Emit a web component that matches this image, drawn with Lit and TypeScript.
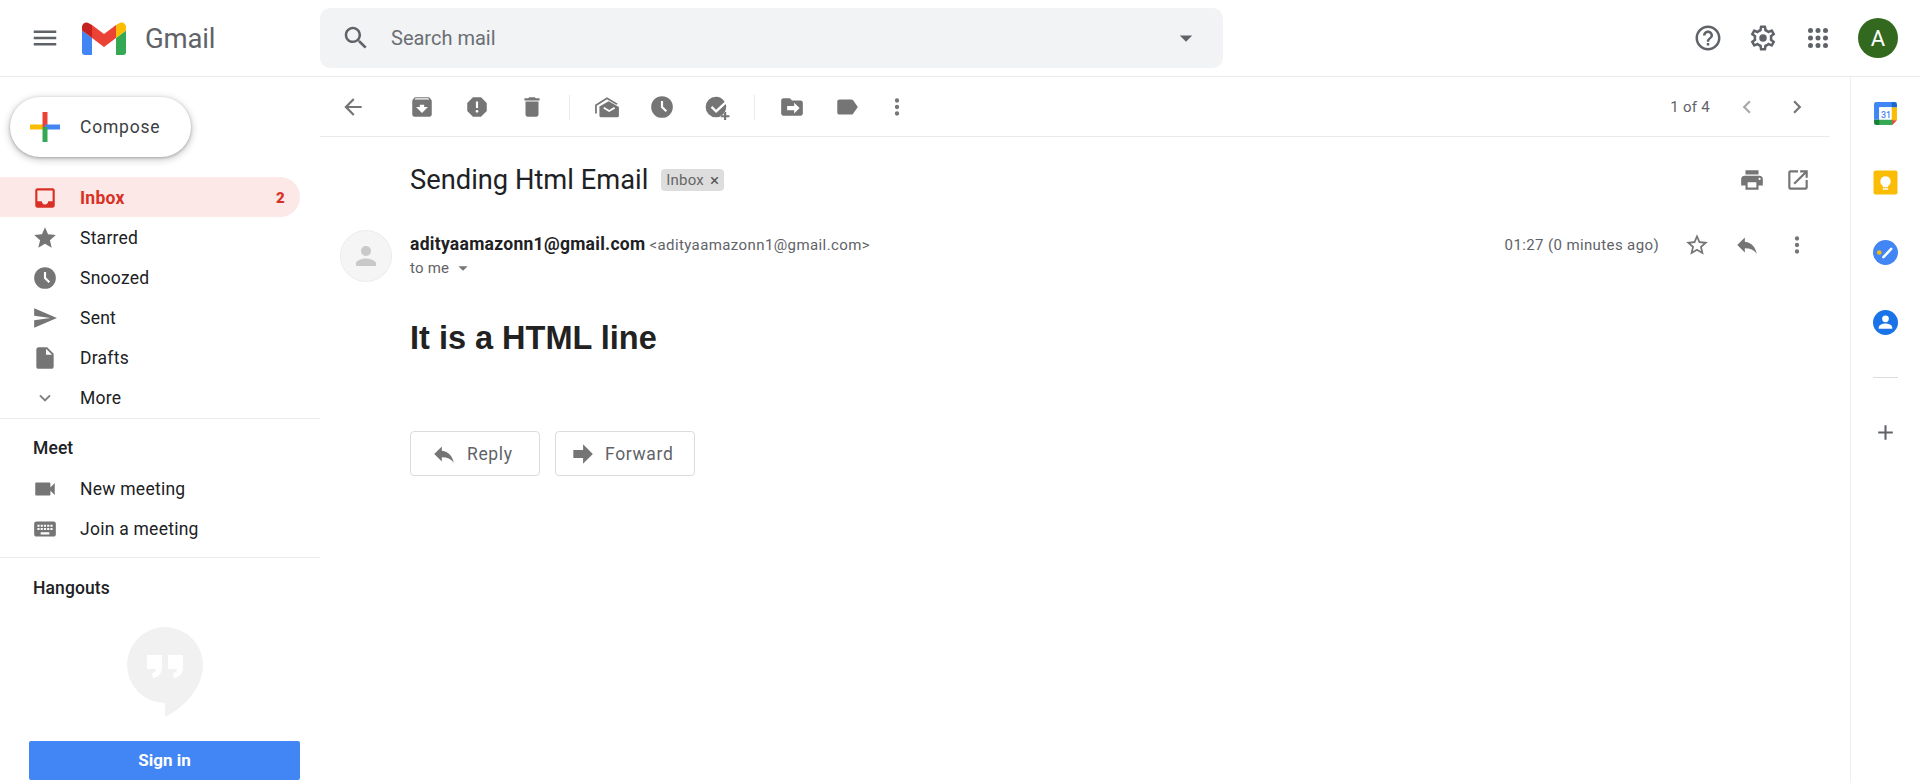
import { LitElement, html, css, svg } from "lit";
import { customElement } from "lit/decorators.js";

const P: Record<string, string> = {
  menu: "M3 18h18v-2H3v2zm0-5h18v-2H3v2zm0-7v2h18V6H3z",
  search: "M15.5 14h-.79l-.28-.27C15.41 12.59 16 11.11 16 9.5 16 5.91 13.09 3 9.5 3S3 5.91 3 9.5 5.91 16 9.5 16c1.61 0 3.09-.59 4.23-1.57l.27.28v.79l5 4.99L20.49 19l-4.99-5zm-6 0C7.01 14 5 11.99 5 9.5S7.01 5 9.5 5 14 7.01 14 9.5 11.99 14 9.5 14z",
  drop: "M7 10l5 5 5-5z",
  help: "M11 18h2v-2h-2v2zm1-16C6.48 2 2 6.48 2 12s4.48 10 10 10 10-4.48 10-10S17.52 2 12 2zm0 18c-4.41 0-8-3.59-8-8s3.59-8 8-8 8 3.59 8 8-3.59 8-8 8zm0-14c-2.21 0-4 1.79-4 4h2c0-1.1.9-2 2-2s2 .9 2 2c0 2-3 1.75-3 5h2c0-2.25 3-2.5 3-5 0-2.21-1.79-4-4-4z",
  gear: "M19.43 12.98c.04-.32.07-.64.07-.98 0-.34-.03-.66-.07-.98l2.11-1.65c.19-.15.24-.42.12-.64l-2-3.46c-.09-.16-.26-.25-.44-.25-.06 0-.12.01-.17.03l-2.49 1c-.52-.4-1.08-.73-1.69-.98l-.38-2.65C14.46 2.18 14.25 2 14 2h-4c-.25 0-.46.18-.49.42l-.38 2.65c-.61.25-1.17.59-1.69.98l-2.49-1c-.06-.02-.12-.03-.18-.03-.17 0-.34.09-.43.25l-2 3.46c-.13.22-.07.49.12.64l2.11 1.65c-.04.32-.07.65-.07.98 0 .33.03.66.07.98l-2.11 1.65c-.19.15-.24.42-.12.64l2 3.46c.09.16.26.25.44.25.06 0 .12-.01.17-.03l2.49-1c.52.4 1.08.73 1.69.98l.38 2.65c.03.24.24.42.49.42h4c.25 0 .46-.18.49-.42l.38-2.65c.61-.25 1.17-.59 1.69-.98l2.49 1c.06.02.12.03.18.03.17 0 .34-.09.43-.25l2-3.46c.12-.22.07-.49-.12-.64l-2.11-1.65zm-1.98-1.71c.04.31.05.52.05.73 0 .21-.02.43-.05.73l-.14 1.13.89.7 1.08.84-.7 1.21-1.27-.51-1.04-.42-.9.68c-.43.32-.84.56-1.25.73l-1.06.43-.16 1.13-.2 1.35h-1.4l-.19-1.35-.16-1.13-1.06-.43c-.43-.18-.83-.41-1.23-.71l-.91-.7-1.06.43-1.27.51-.7-1.21 1.08-.84.89-.7-.14-1.13c-.03-.31-.05-.54-.05-.74s.02-.43.05-.73l.14-1.13-.89-.7-1.08-.84.7-1.21 1.27.51 1.04.42.9-.68c.43-.32.84-.56 1.25-.73l1.06-.43.16-1.13.2-1.35h1.39l.19 1.35.16 1.13 1.06.43c.43.18.83.41 1.23.71l.91.7 1.06-.43 1.27-.51.7 1.21-1.07.85-.89.7.14 1.13zM12 9a3 3 0 1 0 0 6 3 3 0 0 0 0-6z",
  inbox: "M19 3H4.99c-1.11 0-1.98.89-1.98 2L3 19c0 1.1.88 2 1.99 2H19c1.1 0 2-.9 2-2V5c0-1.11-.9-2-2-2zm0 12h-4c0 1.66-1.35 3-3 3s-3-1.34-3-3H4.99V5H19v10z",
  star: "M12 17.27L18.18 21l-1.64-7.03L22 9.24l-7.19-.61L12 2 9.19 8.63 2 9.24l5.46 4.73L5.82 21z",
  starO: "M22 9.24l-7.19-.62L12 2 9.19 8.63 2 9.24l5.46 4.73L5.82 21 12 17.27 18.18 21l-1.63-7.03L22 9.24zM12 15.4l-3.76 2.27 1-4.28-3.32-2.88 4.38-.38L12 6.1l1.71 4.04 4.38.38-3.32 2.88 1 4.28L12 15.4z",
  clock: "M12 2a10 10 0 1 0 0 20 10 10 0 0 0 0-20zm3.3 14.7L11 12.4V6.5h2v5.07l3.7 3.72-1.4 1.41z",
  send: "M2.01 21L23 12 2.01 3 2 10l15 2-15 2z",
  draft: "M6 2c-1.1 0-1.99.9-1.99 2L4 20c0 1.1.89 2 1.99 2H18c1.1 0 2-.9 2-2V8l-6-6H6zm7 7V3.5L18.5 9H13z",
  more: "M16.59 8.59L12 13.17 7.41 8.59 6 10l6 6 6-6z",
  video: "M17 10.5V7c0-.55-.45-1-1-1H4c-.55 0-1 .45-1 1v10c0 .55.45 1 1 1h12c.55 0 1-.45 1-1v-3.5l4 4v-11l-4 4z",
  kb: "M20 5H4c-1.1 0-1.99.9-1.99 2L2 17c0 1.1.9 2 2 2h16c1.1 0 2-.9 2-2V7c0-1.1-.9-2-2-2zm-9 3h2v2h-2V8zm0 3h2v2h-2v-2zM8 8h2v2H8V8zm0 3h2v2H8v-2zm-1 2H5v-2h2v2zm0-3H5V8h2v2zm9 7H8v-2h8v2zm0-4h-2v-2h2v2zm0-3h-2V8h2v2zm3 3h-2v-2h2v2zm0-3h-2V8h2v2z",
  back: "M20 11H7.83l5.59-5.59L12 4l-8 8 8 8 1.41-1.41L7.83 13H20v-2z",
  archive: "M20.54 5.23l-1.39-1.68C18.88 3.21 18.47 3 18 3H6c-.47 0-.88.21-1.16.55L3.46 5.23C3.17 5.57 3 6.02 3 6.5V19c0 1.1.9 2 2 2h14c1.1 0 2-.9 2-2V6.5c0-.48-.17-.93-.46-1.27zM12 17.5L6.5 12H10v-2h4v2h3.5L12 17.5zM5.12 5l.81-1h12l.94 1H5.12z",
  report: "M15.73 3H8.27L3 8.27v7.46L8.27 21h7.46L21 15.73V8.27L15.73 3zM12 17.3c-.72 0-1.3-.58-1.3-1.3 0-.72.58-1.3 1.3-1.3.72 0 1.3.58 1.3 1.3 0 .72-.58 1.3-1.3 1.3zm1-4.3h-2V7h2v6z",
  del: "M6 19c0 1.1.9 2 2 2h8c1.1 0 2-.9 2-2V7H6v12zM19 4h-3.5l-1-1h-5l-1 1H5v2h14V4z",
  open: "M1 10L12 3l10 6-1.4.9L12 4.800 2.600 10.800V18H1zM5 11.500L13.500 6.800 23 12v8a1.500 1.500 0 0 1-1.500 1.500H6.500A1.500 1.500 0 0 1 5 20zm3.500 1.800l5.500 3.400 5.500-3.400-1-1.400-4.500 2.800-4.500-2.800z",
  task: "M11 2.500a9.500 9.500 0 1 0 9.500 9.500c0-1-.15-1.900-.4-2.800l-8.900 8.400L6.200 12.600l1.500-1.500 3.400 3.500 8-7.400A9.500 9.500 0 0 0 11 2.500zM18.500 16.500h2v3h3v2h-3v3h-2v-3h-3v-2h3z",
  folder: "M20 6h-8l-2-2H4c-1.100 0-1.990.9-1.990 2L2 18c0 1.100.9 2 2 2h16c1.100 0 2-.9 2-2V8c0-1.100-.9-2-2-2zm-6 12v-3H7.500v-4H14V8l5 5-5 5z",
  label: "M17.630 5.840C17.270 5.330 16.670 5 16 5L5 5.010C3.900 5.010 3 5.900 3 7v10c0 1.100.9 1.990 2 1.990L16 19c.67 0 1.270-.33 1.630-.84L22 12l-4.370-6.160z",
  dots: "M12 8a2 2 0 1 0 0-4 2 2 0 0 0 0 4zm0 2a2 2 0 1 0 0 4 2 2 0 0 0 0-4zm0 6a2 2 0 1 0 0 4 2 2 0 0 0 0-4z",
  prev: "M15.410 7.410L14 6l-6 6 6 6 1.410-1.410L10.830 12z",
  next: "M10 6L8.590 7.410 13.170 12l-4.580 4.590L10 18l6-6z",
  print: "M19 8H5c-1.660 0-3 1.340-3 3v6h4v4h12v-4h4v-6c0-1.660-1.340-3-3-3zm-3 11H8v-5h8v5zm3-7c-.55 0-1-.45-1-1s.45-1 1-1 1 .45 1 1-.45 1-1 1zm-1-9H6v4h12V3z",
  newwin: "M19 19H5V5h7V3H5c-1.110 0-2 .9-2 2v14c0 1.100.89 2 2 2h14c1.100 0 2-.9 2-2v-7h-2v7zM14 3v2h3.590l-9.830 9.830 1.410 1.410L19 6.410V10h2V3h-7z",
  reply: "M10 9V5l-7 7 7 7v-4.100c5 0 8.500 1.600 11 5.100-1-5-4-10-11-11z",
  forward: "M13 3l9 9-9 9v-5.400H4V8.400h9z",
  person: "M12 12c2.210 0 4-1.790 4-4s-1.790-4-4-4-4 1.790-4 4 1.790 4 4 4zm0 2c-2.670 0-8 1.340-8 4v2h16v-2c0-2.660-5.330-4-8-4z",
  apps: "M6 8a2 2 0 1 0 0-4 2 2 0 0 0 0 4zm6 0a2 2 0 1 0 0-4 2 2 0 0 0 0 4zm6 0a2 2 0 1 0 0-4 2 2 0 0 0 0 4zM6 14a2 2 0 1 0 0-4 2 2 0 0 0 0 4zm6 0a2 2 0 1 0 0-4 2 2 0 0 0 0 4zm6 0a2 2 0 1 0 0-4 2 2 0 0 0 0 4zM6 20a2 2 0 1 0 0-4 2 2 0 0 0 0 4zm6 0a2 2 0 1 0 0-4 2 2 0 0 0 0 4zm6 0a2 2 0 1 0 0-4 2 2 0 0 0 0 4z",
  plus: "M19 13h-6v6h-2v-6H5v-2h6V5h2v6h6v2z",
};

const ic = (n: string, cls = "") =>
  html`<svg class="ic ${cls}" viewBox="0 0 24 24"><path d=${P[n]}></path></svg>`;

const gmail = svg`<path fill="#4285f4" d="M3 33h7V16L0 8.500V30a3 3 0 0 0 3 3"/><path fill="#34a853" d="M34 33h7a3 3 0 0 0 3-3V8.500L34 16"/><path fill="#fbbc04" d="M34 3v13l10-7.500V5c0-3.700-4.200-5.800-7.200-3.600z"/><path fill="#ea4335" d="M10 16V3l12 9 12-9v13l-12 9z"/><path fill="#c5221f" d="M0 5v3.500L10 16V3L7.200 1.400C4.200-.8 0 1.300 0 5z"/>`;

@customElement("app-root")
export class AppRoot extends LitElement {
  static styles = css`
    :host { display: block; width: 1920px; height: 783px; overflow: hidden; background: #fff; font-family: Roboto, "Liberation Sans", sans-serif; color: #202124; }
    * { box-sizing: border-box; }
    .ic { width: 26px; height: 26px; fill: #757575; flex: none; display: block; }
    .top { display: flex; align-items: center; height: 77px; border-bottom: 1px solid #e8eaed; padding-left: 30px; }
    .top .ic { width: 30px; height: 30px; fill: #5f6368; }
    .logo { width: 44px; height: 33px; margin-left: 22px; flex: none; }
    .word { font-size: 27.5px; color: #5f6368; margin-left: 19px; width: 175px; letter-spacing: -0.2px; }
    .search { width: 903px; height: 60px; background: #f1f3f4; border-radius: 10px; display: flex; align-items: center; padding-left: 21px; font-size: 20px; color: #6b6f74; }
    .search span { margin-left: 20px; flex: 1; }
    .search .ic.dd { margin-right: 22px; }
    .tools { margin-left: auto; display: flex; align-items: center; gap: 25px; padding-right: 22px; }
    .av { width: 40px; height: 40px; border-radius: 50%; background: #33691e; color: #fff; display: flex; align-items: center; justify-content: center; font-size: 22px; }
    .layout { display: flex; height: 706px; }
    .side { width: 320px; flex: none; padding-top: 20px; }
    .compose { margin-left: 10px; width: 181px; height: 60px; border-radius: 30px; display: flex; align-items: center; background: #fff; box-shadow: 0 1px 3px 0 rgba(60,64,67,.35), 0 2px 6px 2px rgba(60,64,67,.2); font-size: 17.5px; color: #3c4043; padding-left: 17px; letter-spacing: .8px; margin-bottom: 20px; }
    .compose svg { width: 36px; height: 36px; flex: none; margin-right: 17px; }
    .row { height: 40px; display: flex; align-items: center; padding: 2px 0 0 32px; font-size: 17.5px; gap: 22px; letter-spacing: .25px; }
    .row.on { background: #fce8e6; color: #d93025; font-weight: 700; width: 300px; border-radius: 0 20px 20px 0; padding-right: 15px; }
    .row.on .ic { fill: #d93025; }
    .row b { margin-left: auto; font-size: 15px; }
    .row .ic.mini { fill: #808080; transform: scale(.88); }
    .hr { height: 1px; background: #e8eaed; margin-top: 1px; }
    .hr.g { margin-top: 9px; }
    .h { font-size: 17.5px; font-weight: 500; padding-left: 33px; height: 49px; line-height: 58px; letter-spacing: .1px; }
    .h.hg { height: 50px; line-height: 60px; }
    .hang { padding-left: 127px; padding-top: 19px; }
    .hang svg { width: 76px; height: 90px; display: block; }
    .sign { margin: 24px 0 0 29px; width: 271px; height: 39px; padding-bottom: 2px; background: #4285f4; color: #fff; border-radius: 2px; display: flex; align-items: center; justify-content: center; font-weight: 700; font-size: 17px; }
    .main { flex: 1; min-width: 0; }
    .bar { height: 60px; padding-top: 1px; margin-right: 20px; border-bottom: 1px solid #e8eaed; display: flex; align-items: center; padding-left: 20px; }
    .bar > .ic { margin-left: 29px; }
    .bar > .ic.first { margin-left: 0; }
    .bar > .ic.gapb { margin-left: 43px; }
    .bar > .ic.aft { margin-left: 24px; }
    .sep { width: 1px; height: 25px; background: #e8eaed; margin-left: 24px; flex: none; }
    .pager { margin-left: auto; display: flex; align-items: center; font-size: 15px; color: #5f6368; padding-right: 20px; }
    .pager span { margin-right: 24px; letter-spacing: .3px; }
    .pager .ic + .ic { margin-left: 24px; }
    .pager .dim { fill: #a8a8a8; }
    .subj { display: flex; align-items: center; height: 60px; margin-top: 13px; padding: 0 19px 0 90px; margin-right: 20px; }
    .subj h1 { font-weight: 400; font-size: 27.3px; margin: 0; color: #202124; }
    .chip { margin-left: 13px; height: 22px; display: flex; align-items: center; background: #ddd; border-radius: 4px; padding: 0 5px; font-size: 15px; color: #666; gap: 6px; letter-spacing: .2px; }
    .chip i { font-style: normal; font-size: 17px; line-height: 1; color: #555; }
    .subj .r { margin-left: auto; display: flex; gap: 20px; }
    .msg { display: flex; padding: 0 20px; margin-top: 20px; margin-right: 20px; }
    .ava { width: 52px; height: 52px; border-radius: 50%; background: #f5f5f5; border: 1px solid #ececec; display: flex; align-items: center; justify-content: center; flex: none; margin-right: 18px; }
    .ava .ic { fill: #c9c9c9; width: 30px; height: 30px; }
    .who { padding-top: 4px; }
    .line1 { display: flex; align-items: baseline; gap: 4px; height: 21px; }
    .name { font-weight: 700; font-size: 17.5px; color: #202124; letter-spacing: .28px; }
    .addr { font-size: 15px; color: #5f6368; letter-spacing: .4px; }
    .to { display: flex; align-items: center; font-size: 15px; color: #5f6368; height: 26px; letter-spacing: .2px; }
    .to .ic { width: 22px; height: 22px; margin-left: 3px; }
    .meta { margin-left: auto; display: flex; align-items: center; height: 30px; font-size: 15px; color: #5f6368; letter-spacing: .38px; }
    .meta span { margin-right: 25px; }
    .meta .ic + .ic { margin-left: 24px; }
    .body { margin: 36px 0 0 90px; font-family: "Liberation Sans", Arial, sans-serif; font-weight: 700; font-size: 32.5px; color: #222; height: 40px; line-height: 40px; }
    .btns { margin: 73px 0 0 90px; display: flex; gap: 15px; }
    .btn { height: 45px; border: 1px solid #dadce0; border-radius: 4px; display: flex; align-items: center; font-size: 17.5px; color: #5f6368; letter-spacing: .65px; }
    .btn.a { width: 130px; padding-left: 20px; gap: 10px; }
    .btn.b { width: 140px; padding-left: 13px; gap: 10px; }
    .rail { width: 70px; flex: none; border-left: 1px solid #eceff1; display: flex; flex-direction: column; align-items: center; padding-top: 24px; }
    .rail svg { width: 25px; height: 25px; display: block; flex: none; margin-bottom: 44px; }
    .rail svg.k { margin-bottom: 45px; }
    .rail svg.t { margin-bottom: 45px; }
    .rail svg.c { margin-bottom: 42px; }
    .rail .d { width: 25px; height: 1px; background: #dadce0; margin: 0 0 42px; }
    .rail .plus { fill: #5f6368; }
  `;

  render() {
    return html`
      <div class="top">
        ${ic("menu")}
        <svg class="logo" viewBox="0 0 44 33">${gmail}</svg>
        <div class="word">Gmail</div>
        <div class="search">${ic("search")}<span>Search mail</span>${ic("drop", "dd")}</div>
        <div class="tools">${ic("help")}${ic("gear")}${ic("apps")}<div class="av">A</div></div>
      </div>
      <div class="layout">
        <aside class="side">
          <div class="compose">
            <svg viewBox="0 0 36 36"><path fill="#fbbc04" d="M3 15.500h15v5H3z"/><path fill="#ea4335" d="M15.500 3h5v15h-5z"/><path fill="#4285f4" d="M18 15.500h15v5H18z"/><path fill="#34a853" d="M15.500 18h5v15h-5z"/></svg>
            Compose
          </div>
          <div class="row on">${ic("inbox")}Inbox<b>2</b></div>
          <div class="row">${ic("star")}Starred</div>
          <div class="row">${ic("clock")}Snoozed</div>
          <div class="row">${ic("send")}Sent</div>
          <div class="row">${ic("draft")}Drafts</div>
          <div class="row">${ic("more", "mini")}More</div>
          <div class="hr"></div>
          <div class="h">Meet</div>
          <div class="row">${ic("video")}New meeting</div>
          <div class="row">${ic("kb")}Join a meeting</div>
          <div class="hr g"></div>
          <div class="h hg">Hangouts</div>
          <div class="hang">
            <svg viewBox="0 0 76 90"><path fill="#f1f1f1" d="M38 0a38 38 0 0 0 0 76v14c15-7 38-27 38-52A38 38 0 0 0 38 0z"/><path fill="#fff" d="M20 28h15v12c0 6-3 10-9 11l-1-5c3 0 4-2 4-4h-9zM41 28h15v12c0 6-3 10-9 11l-1-5c3 0 4-2 4-4h-9z"/></svg>
          </div>
          <div class="sign">Sign in</div>
        </aside>
        <main class="main">
          <div class="bar">
            ${ic("back", "first")}
            ${ic("archive", "gapb")}${ic("report")}${ic("del")}
            <div class="sep"></div>
            ${ic("open", "aft")}${ic("clock")}${ic("task")}
            <div class="sep"></div>
            ${ic("folder", "aft")}${ic("label")}${ic("dots", "aft")}
            <div class="pager"><span>1 of 4</span>${ic("prev", "dim")}${ic("next")}</div>
          </div>
          <div class="subj">
            <h1>Sending Html Email</h1>
            <div class="chip">Inbox<i>×</i></div>
            <div class="r">${ic("print")}${ic("newwin")}</div>
          </div>
          <div class="msg">
            <div class="ava">${ic("person")}</div>
            <div class="who">
              <div class="line1"><span class="name">adityaamazonn1@gmail.com</span><span class="addr">&lt;adityaamazonn1@gmail.com&gt;</span></div>
              <div class="to">to me${ic("drop")}</div>
            </div>
            <div class="meta"><span>01:27 (0 minutes ago)</span>${ic("starO")}${ic("reply")}${ic("dots")}</div>
          </div>
          <div class="body">It is a HTML line</div>
          <div class="btns">
            <div class="btn a">${ic("reply")}Reply</div>
            <div class="btn b">${ic("forward")}Forward</div>
          </div>
        </main>
        <nav class="rail">
          <svg viewBox="0 0 24 24"><path fill="#4285f4" d="M1 3a2 2 0 0 1 2-2h16v5H6v12H1z"/><path fill="#fff" d="M6 6h13v12H6z"/><path fill="#fbbc04" d="M18 6h5v12.500h-5z"/><path fill="#34a853" d="M5 18h14v5H5z"/><path fill="#188038" d="M1 18h5v5H3a2 2 0 0 1-2-2z"/><path fill="#1967d2" d="M18 1h3a2 2 0 0 1 2 2v3h-5z"/><path fill="#ea4335" d="M18.500 18.500H23L18.500 23z"/><text x="12.500" y="16" font-family="Roboto" font-size="8.500" font-weight="500" fill="#4285f4" text-anchor="middle">31</text></svg>
          <svg class="k" viewBox="0 0 24 24"><rect x="0.500" y="0.500" width="23" height="23" rx="2" fill="#fbbc04"/><path fill="#fff" d="M12 6a5 5 0 0 0-2.500 9.300V16.500h5v-1.200A5 5 0 0 0 12 6zM9.500 17.500h5V19h-5z"/></svg>
          <svg class="t" viewBox="0 0 24 24"><circle cx="12" cy="12" r="12" fill="#4285f4"/><circle cx="6" cy="12" r="2.200" fill="#fbbc04"/><path stroke="#fff" stroke-width="2.400" stroke-linecap="round" d="M10 16.500 17.500 8.500"/></svg>
          <svg class="c" viewBox="0 0 24 24"><circle cx="12" cy="12" r="12" fill="#1a73e8"/><circle cx="12" cy="8.500" r="3.200" fill="#fff"/><path fill="#fff" d="M5.500 17c0-3 4-4 6.500-4s6.500 1 6.500 4v1h-13z"/></svg>
          <div class="d"></div>
          <svg class="plus" viewBox="0 0 24 24"><path d=${P.plus}></path></svg>
        </nav>
      </div>
    `;
  }
}
